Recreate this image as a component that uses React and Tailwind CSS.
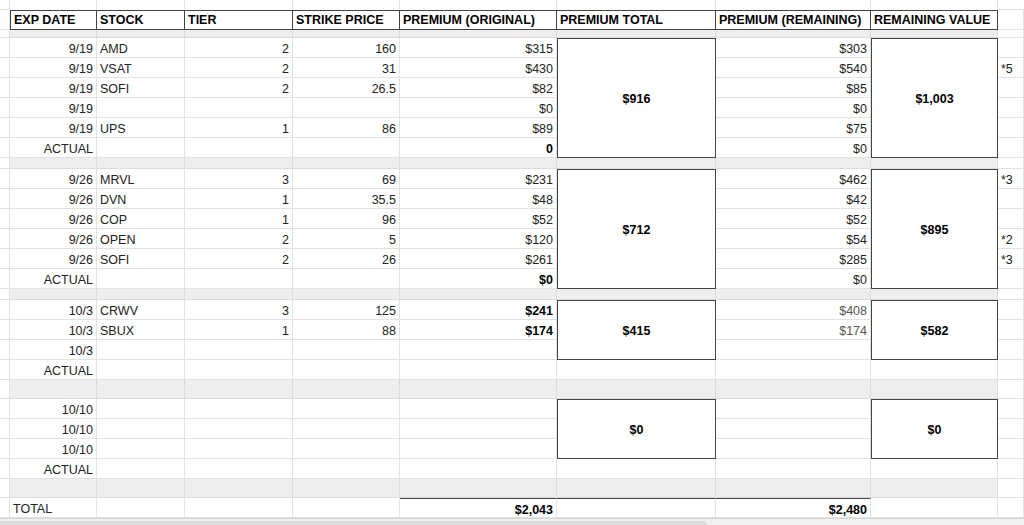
import React from "react";

// one block per expiry date; span = how many rows the total boxes cover
const groups = [
  {
    span: 6,
    total: "$916",
    remaining: "$1,003",
    rows: [
      ["9/19", "AMD", "2", "160", "$315", "$303", ""],
      ["9/19", "VSAT", "2", "31", "$430", "$540", "*5"],
      ["9/19", "SOFI", "2", "26.5", "$82", "$85", ""],
      ["9/19", "", "", "", "$0", "$0", ""],
      ["9/19", "UPS", "1", "86", "$89", "$75", ""],
      ["ACTUAL", "", "", "", { t: "0", bold: true }, "$0", ""],
    ],
  },
  {
    span: 6,
    total: "$712",
    remaining: "$895",
    rows: [
      ["9/26", "MRVL", "3", "69", "$231", "$462", "*3"],
      ["9/26", "DVN", "1", "35.5", "$48", "$42", ""],
      ["9/26", "COP", "1", "96", "$52", "$52", ""],
      ["9/26", "OPEN", "2", "5", "$120", "$54", "*2"],
      ["9/26", "SOFI", "2", "26", "$261", "$285", "*3"],
      ["ACTUAL", "", "", "", { t: "$0", bold: true }, "$0", ""],
    ],
  },
  {
    span: 3,
    total: "$415",
    remaining: "$582",
    rows: [
      ["10/3", "CRWV", "3", "125", { t: "$241", bold: true }, { t: "$408", light: true }, ""],
      ["10/3", "SBUX", "1", "88", { t: "$174", bold: true }, { t: "$174", light: true }, ""],
      ["10/3", "", "", "", "", "", ""],
      ["ACTUAL", "", "", "", "", "", ""],
    ],
  },
  {
    span: 3,
    total: "$0",
    remaining: "$0",
    rows: [
      ["10/10", "", "", "", "", "", ""],
      ["10/10", "", "", "", "", "", ""],
      ["10/10", "", "", "", "", "", ""],
      ["ACTUAL", "", "", "", "", "", ""],
    ],
  },
];

const headers = ["EXP DATE", "STOCK", "TIER", "STRIKE PRICE", "PREMIUM (ORIGINAL)", "PREMIUM TOTAL", "PREMIUM (REMAINING)", "REMAINING VALUE"];

function Cell({ v, left, className = "" }) {
  let text = v
  let extra = ""
  if (v && typeof v === "object") {
    text = v.t
    if (v.bold) extra += " font-bold text-black"
    if (v.light) extra += " text-[#555]"
  }
  return (
    <div className={`flex items-center overflow-hidden whitespace-nowrap border-r border-b border-[#e2e2e2] px-[3px] pt-[4px] ${left ? "justify-start" : "justify-end"}${extra} ${className}`}>
      {text}
    </div>
  )
}

function Box({ span, children }) {
  return (
    <div className={`${span === 6 ? "row-span-6" : "row-span-3"} flex items-center justify-center border border-[#444] bg-white pt-[2px] font-bold text-black`}>
      {children}
    </div>
  )
}

function Band() {
  return (
    <>
      <Cell v="" />
      {[1, 2, 3, 4, 5, 6, 7, 8].map((i) => (
        <div key={i} className="border-r border-b border-[#dcdcdc] bg-[#eeeeee]"></div>
      ))}
      <Cell v="" />
    </>
  )
}

export default function App() {
  let cells = []

  // top blank row
  cells.push(<div key="t0" className="border-r border-b border-[#e2e2e2]"></div>)
  for (let i = 1; i <= 8; i++) cells.push(<div key={"t" + i} className="border-r border-[#e2e2e2]"></div>)
  cells.push(<div key="t9" className="border-b border-[#e2e2e2]"></div>)

  // header row
  cells.push(<div key="h0" className="border-r border-b border-[#e2e2e2]"></div>)
  headers.forEach((h, i) => {
    cells.push(
      <div key={"h" + (i + 1)} className={`flex items-center whitespace-nowrap border-t border-b border-r border-[#444] px-[3px] font-bold text-black ${i === 0 ? "border-l" : ""}`}>
        {h}
      </div>
    )
  })
  cells.push(<div key="h9" className="border-r border-b border-[#e2e2e2]"></div>)

  groups.forEach((g, gi) => {
    cells.push(<Band key={"b" + gi} />)
    g.rows.forEach((r, ri) => {
      const k = `g${gi}r${ri}`
      cells.push(<Cell key={k + "c0"} v="" />)
      cells.push(<Cell key={k + "c1"} v={r[0]} />)
      cells.push(<Cell key={k + "c2"} v={r[1]} left />)
      cells.push(<Cell key={k + "c3"} v={r[2]} />)
      cells.push(<Cell key={k + "c4"} v={r[3]} />)
      cells.push(<Cell key={k + "c5"} v={r[4]} />)
      if (ri === 0) cells.push(<Box key={k + "c6"} span={g.span}>{g.total}</Box>)
      else if (ri >= g.span) cells.push(<Cell key={k + "c6"} v="" />)
      cells.push(<Cell key={k + "c7"} v={r[5]} />)
      if (ri === 0) cells.push(<Box key={k + "c8"} span={g.span}>{g.remaining}</Box>)
      else if (ri >= g.span) cells.push(<Cell key={k + "c8"} v="" />)
      cells.push(<Cell key={k + "c9"} v={r[6]} left />)
    })
  })

  cells.push(<Band key="blast" />)

  // total row
  cells.push(<Cell key="tot0" v="" />)
  cells.push(<Cell key="tot1" v="TOTAL" left />)
  cells.push(<Cell key="tot2" v="" />)
  cells.push(<Cell key="tot3" v="" />)
  cells.push(<Cell key="tot4" v="" />)
  cells.push(<Cell key="tot5" v={{ t: "$2,043", bold: true }} className="border-t border-t-[#444]" />)
  cells.push(<Cell key="tot6" v="" className="border-t border-t-[#444]" />)
  cells.push(<Cell key="tot7" v={{ t: "$2,480", bold: true }} className="border-t border-t-[#444]" />)
  cells.push(<Cell key="tot8" v="" />)
  cells.push(<Cell key="tot9" v="" />)

  return (
    <div className="w-[1024px] h-[525px] overflow-hidden bg-white font-['Liberation_Sans',Arial,sans-serif] text-[12.5px] text-[#222]">
      <div className="grid grid-cols-[10px_87px_88px_108px_107px_157px_159px_155px_127px_1fr] grid-rows-[10px_20px_8px_20px_20px_20px_20px_20px_20px_11px_20px_20px_20px_20px_20px_20px_11px_20px_20px_20px_20px_19px_20px_20px_20px_20px_19px_20px]">
        {cells}
      </div>
      <div className="h-[7px] border-t border-[#d6d6d6] bg-[#f1f1f1] pt-[2px]">
        <div className="h-full w-[707px] rounded-tr-[4px] bg-[#dcdcdc]"></div>
      </div>
    </div>
  )
}
